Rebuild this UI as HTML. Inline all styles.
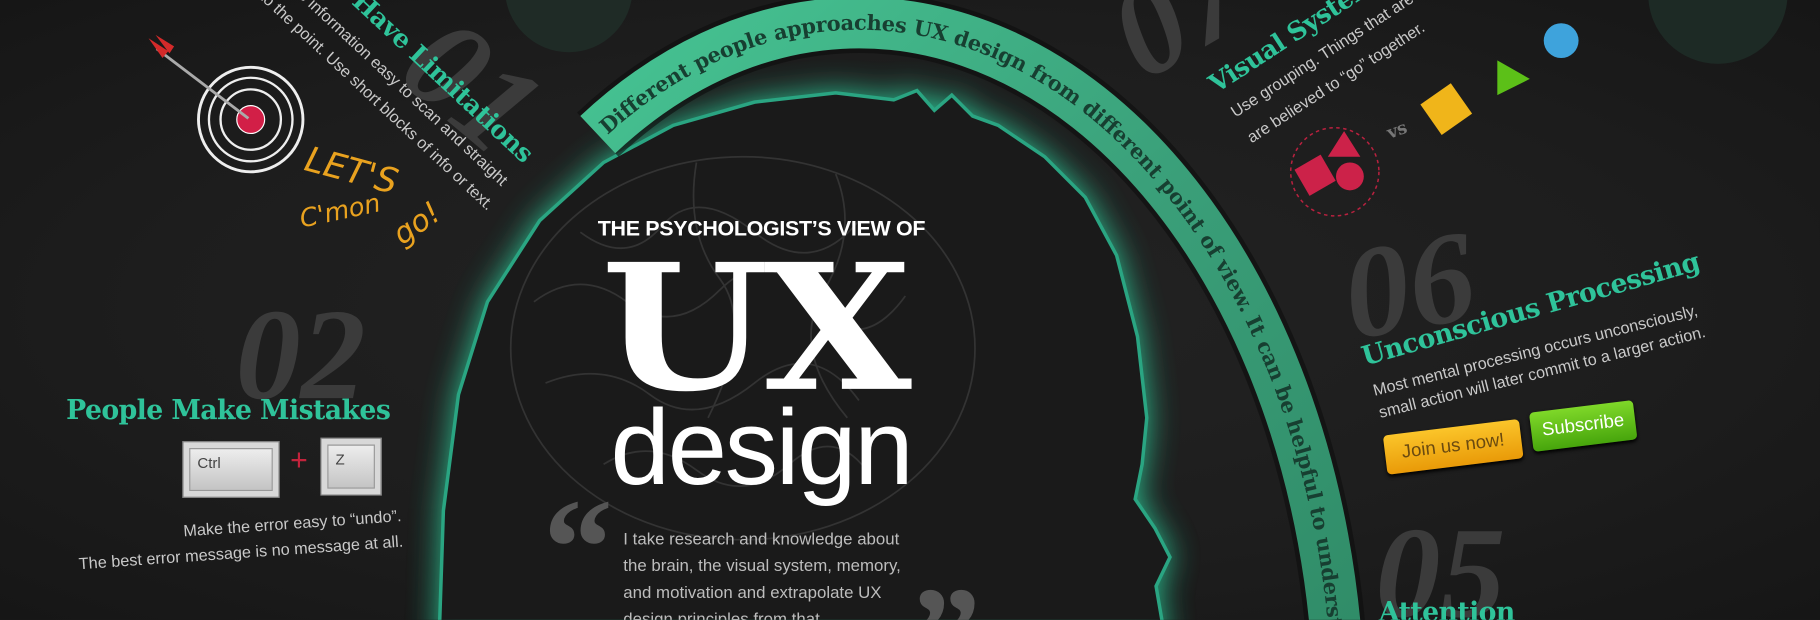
<!DOCTYPE html>
<html><head><meta charset="utf-8">
<style>
html,body{margin:0;padding:0;background:#1c1c1c;overflow:hidden;width:1820px;height:620px}
.stage{position:absolute;left:0;top:0;width:1568px;height:534px;transform:scale(1.16071);transform-origin:0 0;overflow:hidden;
background:radial-gradient(ellipse at 50% 50%,#232323 0%,#1d1d1d 60%,#161616 100%);font-family:"Liberation Sans",sans-serif}
.a{position:absolute;white-space:nowrap}
.num{font-family:"Liberation Serif",serif;font-weight:bold;font-style:italic;color:#3b3b3b;font-size:112px;line-height:1}
.tt{font-family:"DejaVu Serif",serif;font-weight:bold;color:#2fc39a;letter-spacing:-0.5px}
.bd{color:#c9c9c9;font-size:14px}
.key{position:absolute;background:linear-gradient(#f4f4f4,#bdbdbd);border:1px solid #888;box-shadow:inset 0 0 0 5px #d8d8d8,inset 0 0 0 6px #999;font-size:13px;color:#444;padding:10px 0 0 12px;box-sizing:border-box}
.hand{font-family:"DejaVu Sans",sans-serif;color:#e9a21f;font-style:italic;font-weight:300}
</style></head><body>
<div class="stage">

<svg class="a" style="left:0;top:0" width="1568" height="534" viewBox="0 0 1568 534">
<defs>
<filter id="bl" x="-20%" y="-20%" width="140%" height="140%"><feGaussianBlur stdDeviation="14"/></filter>
<linearGradient id="band" x1="0" y1="0" x2="1" y2="1"><stop offset="0" stop-color="#46c493"/><stop offset="0.5" stop-color="#3a9f79"/><stop offset="1" stop-color="#2f8a66"/></linearGradient>
<path id="arc" d="M515,116 A414,600 0 0 1 1154,620"/>
</defs>
<circle cx="490" cy="-10" r="55" fill="#1f2b26"/>
<circle cx="1480" cy="-5" r="60" fill="#1d2a25"/>
<path d="M378,560 L382,440 L395,340 L420,260 L465,190 L520,140 L580,108 L650,88 L720,80 L770,86 L790,78 L805,95 L820,82 L838,100 L860,108 L900,135 L935,170 L962,220 L980,290 L988,360 L984,400 L978,430 L995,455 L1008,480 L996,505 L1002,540 L1002,560 Z" fill="#2fe0a8" filter="url(#bl)" opacity="0.9"/>
<path d="M378,560 L382,440 L395,340 L420,260 L465,190 L520,140 L580,108 L650,88 L720,80 L770,86 L790,78 L805,95 L820,82 L838,100 L860,108 L900,135 L935,170 L962,220 L980,290 L988,360 L984,400 L978,430 L995,455 L1008,480 L996,505 L1002,540 L1002,560 Z" fill="#1a1a1a" stroke="#2aa582" stroke-width="3"/>
<g fill="none" stroke="#333" stroke-width="1.5">
<ellipse cx="640" cy="300" rx="200" ry="165"/>
<path d="M460,260 q40,-30 80,0 t80,-10 t80,10 t80,-5"/>
<path d="M470,330 q50,-20 90,10 t90,-10 t90,15"/>
<path d="M500,200 q40,30 70,-5 t80,5 t90,-10"/>
<path d="M520,400 q40,-25 80,5 t80,-5 t70,10"/>
<path d="M600,140 q-10,60 20,100 t-10,120"/>
<path d="M720,150 q20,50 -10,100 t20,110"/>
</g>
<path d="M515,116 A414,600 0 0 1 1154,620" fill="none" stroke="#0e0e0e" stroke-width="52" opacity="0.6"/>
<path d="M515,116 A414,600 0 0 1 1154,620" fill="none" stroke="url(#band)" stroke-width="44"/>
<text font-family="DejaVu Serif,serif" font-weight="bold" font-size="18" fill="#173f31" dy="6"><textPath href="#arc" startOffset="6">Different people approaches UX design from different point of view. It can be helpful to underst</textPath></text>
<g transform="translate(216,103)">
<circle r="45" fill="none" stroke="#eee" stroke-width="2.5"/>
<circle r="36" fill="none" stroke="#eee" stroke-width="2"/>
<circle r="26" fill="none" stroke="#eee" stroke-width="2"/>
<circle r="12" fill="#d21f47" stroke="#fff" stroke-width="1"/>
</g>
<line x1="135" y1="42" x2="214" y2="102" stroke="#aaa" stroke-width="2.5"/>
<path d="M128,33 L145,44 L140,50 Z M134,30 L150,40 L146,46 Z" fill="#d42a2a"/>
<circle cx="1345" cy="35" r="15" fill="#3ea3dc"/>
<path d="M1290,52 L1318,68 L1290,82 Z" fill="#5cc018"/>
<rect x="1230" y="78" width="32" height="32" fill="#f0b51a" transform="rotate(-35 1246 94)"/>
<circle cx="1150" cy="148" r="38" fill="none" stroke="#b9213f" stroke-width="1.3" stroke-dasharray="3 3"/>
<rect x="1120" y="138" width="26" height="26" fill="#cc2249" transform="rotate(-30 1133 151)"/>
<path d="M1158,113 L1172,135 L1144,135 Z" fill="#cc2249"/>
<circle cx="1163" cy="152" r="12" fill="#cc2249"/>
</svg>

<div class="a num" style="top:-5px;transform:rotate(40deg);transform-origin:0 0;left:400px">01</div>
<div class="a num" style="left:203px;top:250px">02</div>
<div class="a tt" style="left:0;top:122px;width:448px;text-align:right;font-size:22px;line-height:22px;transform:rotate(43deg);transform-origin:100% 100%">People Have Limitations</div>
<div class="a bd" style="left:0;top:147px;width:430px;text-align:right;line-height:16px;transform:rotate(43deg);transform-origin:100% 100%">Make the information easy to scan and straight</div>
<div class="a bd" style="left:0;top:168px;width:418px;text-align:right;line-height:16px;transform:rotate(43deg);transform-origin:100% 100%">to the point. Use short blocks of info or text.</div>
<div class="a hand" style="left:262px;top:130px;font-size:30px;transform:rotate(15deg)">LET'S</div>
<div class="a hand" style="left:258px;top:170px;font-size:22px;transform:rotate(-12deg)">C'mon</div>
<div class="a hand" style="left:338px;top:178px;font-size:26px;transform:rotate(-35deg)">go!</div>

<div class="a tt" style="left:57px;top:340px;font-size:23px">People Make Mistakes</div>
<div class="key" style="left:157px;top:380px;width:84px;height:49px">Ctrl</div>
<div class="a" style="left:250px;top:381px;color:#c2233c;font-size:26px">+</div>
<div class="key" style="left:276px;top:377px;width:53px;height:50px">Z</div>
<div class="a bd" style="left:0;top:433px;width:345px;text-align:right;line-height:22px;transform:rotate(-4deg);transform-origin:100% 0">Make the error easy to “undo”.<br>The best error message is no message at all.</div>

<div class="a" style="left:515px;top:186px;color:#fff;font-size:18.5px;font-weight:bold;letter-spacing:-0.3px">THE PSYCHOLOGIST’S VIEW OF</div>
<div class="a" style="left:518px;top:208px;color:#fff;font-family:'DejaVu Serif',serif;font-weight:bold;font-size:150px;line-height:1;transform:scaleX(1.1);transform-origin:0 0;letter-spacing:-4px">UX</div>
<div class="a" style="left:526px;top:340px;color:#fff;font-size:92px;line-height:1;letter-spacing:-2px">design</div>
<div class="a" style="left:468px;top:412px;color:#555;font-family:'Liberation Serif',serif;font-weight:bold;font-size:120px;line-height:1">“</div>
<div class="a" style="left:785px;top:488px;color:#555;font-family:'Liberation Serif',serif;font-weight:bold;font-size:120px;line-height:1">”</div>
<div class="a" style="left:537px;top:454px;color:#bdbdbd;font-size:14.5px;line-height:23px">I take research and knowledge about<br>the brain, the visual system, memory,<br>and motivation and extrapolate UX<br>design principles from that.</div>

<div class="a num" style="left:995px;top:-25px;transform:rotate(-30deg);transform-origin:0 100%">07</div>
<div class="a tt" style="left:1050px;top:62px;font-size:22px;line-height:22px;transform:rotate(-33deg);transform-origin:0 100%">Visual System</div>
<div class="a bd" style="left:1066px;top:88px;line-height:16px;transform:rotate(-33deg);transform-origin:0 100%">Use grouping. Things that are close</div>
<div class="a bd" style="left:1080px;top:110px;line-height:16px;transform:rotate(-33deg);transform-origin:0 100%">are believed to “go” together.</div>
<div class="a" style="left:1195px;top:103px;color:#777;font-family:'DejaVu Serif',serif;font-weight:bold;font-size:15px;transform:rotate(-20deg)">vs</div>

<div class="a num" style="left:1158px;top:190px;transform:rotate(-10deg)">06</div>
<div class="a tt" style="left:1177px;top:296px;font-size:23px;line-height:23px;transform:rotate(-16deg);transform-origin:0 100%">Unconscious Processing</div>
<div class="a bd" style="left:1185px;top:328px;line-height:16px;transform:rotate(-14deg);transform-origin:0 100%">Most mental processing occurs unconsciously,</div>
<div class="a bd" style="left:1190px;top:347px;line-height:16px;transform:rotate(-14deg);transform-origin:0 100%">small action will later commit to a larger action.</div>
<div class="a" style="left:1193px;top:368px;width:118px;height:34px;border-radius:4px;background:linear-gradient(#fbc52a,#e99a08);color:#6a4a10;font-size:16px;line-height:34px;text-align:center;transform:rotate(-7deg);box-shadow:0 2px 3px #000">Join us now!</div>
<div class="a" style="left:1319px;top:350px;width:90px;height:34px;border-radius:4px;background:linear-gradient(#7fd829,#47a50c);color:#fff;font-size:16px;line-height:34px;text-align:center;transform:rotate(-7deg);box-shadow:0 2px 3px #000">Subscribe</div>
<div class="a num" style="left:1185px;top:438px">05</div>
<div class="a tt" style="left:1188px;top:516px;font-size:23px;line-height:23px">Attention</div>
</div>
</body></html>
